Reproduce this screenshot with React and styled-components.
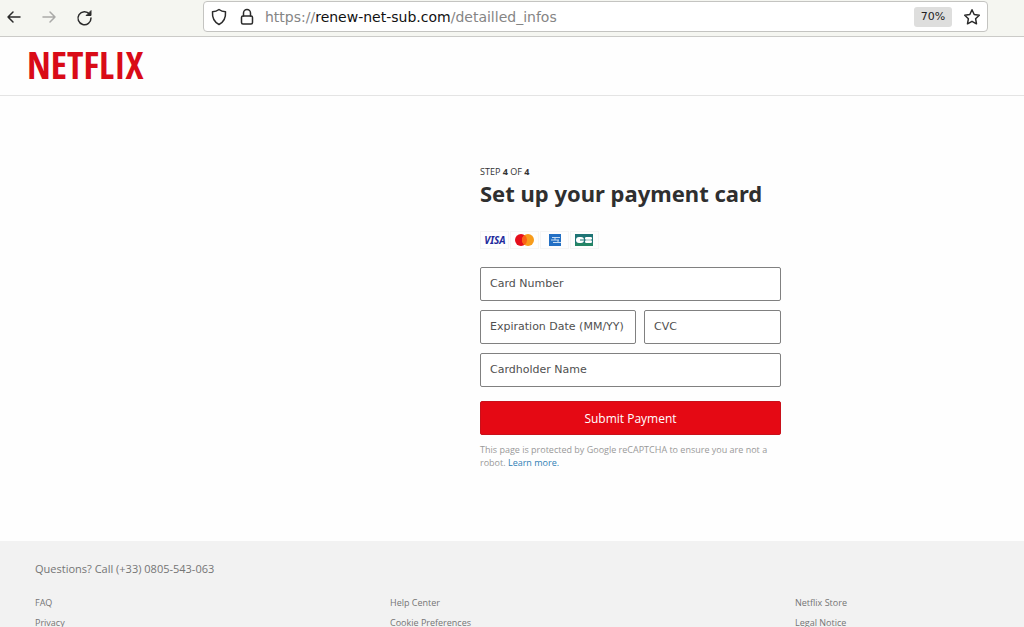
import React from "react";
import styled, { createGlobalStyle } from "styled-components";

const GlobalStyle = createGlobalStyle`
  * {
    box-sizing: border-box;
  }

  body {
    margin: 0;
    background: #fefefe;
    font-family: "Open Sans", "Noto Sans", sans-serif;
  }
`;

const Window = styled.div`
  height: 100vh;
  overflow: hidden;
`;

const Toolbar = styled.div`
  display: flex;
  align-items: center;
  height: 37px;
  padding: 0 36px 3px 4px;
  background: #f5f6f1;
  border-bottom: 1px solid #cbcbc8;
`;

const NavButtons = styled.div`
  display: flex;
  gap: 15px;
  width: 199px;
`;

const IconButton = styled.button`
  display: flex;
  padding: 0;
  border: 0;
  background: none;
  color: ${({ $muted }) => ($muted ? "#aaaaa8" : "#2b2b2b")};

  svg {
    width: 20px;
    height: 20px;
    fill: none;
    stroke: currentColor;
    stroke-width: 1.5;
    stroke-linecap: round;
    stroke-linejoin: round;
  }
`;

const AddressBar = styled.div`
  display: flex;
  flex: 1;
  align-items: center;
  gap: 8px;
  height: 31px;
  padding: 0 5px;
  background: #fff;
  border: 1px solid #c4c4c1;
  border-radius: 4px;
`;

const Url = styled.div`
  flex: 1;
  color: #858585;
  font-family: "DejaVu Sans", sans-serif;
  font-size: 14px;

  span {
    color: #111;
  }
`;

const ZoomLevel = styled.button`
  width: 38px;
  height: 20px;
  margin-right: 2px;
  padding: 0;
  border: 0;
  border-radius: 3px;
  background: #dededd;
  color: #222;
  font: 11px "DejaVu Sans", sans-serif;
`;

const Header = styled.header`
  display: flex;
  align-items: center;
  height: 59px;
  padding: 0 27px 4px;
  border-bottom: 1px solid #e4e4e4;
`;

const Logo = styled.a`
  color: #d90b17;
  font: bold 38px "Liberation Sans Narrow", "Open Sans Condensed", "DejaVu Sans Condensed", sans-serif;
  text-decoration: none;
`;

const Main = styled.main`
  display: flex;
  justify-content: center;
  padding: 69px 0 71px 237px;
`;

const Form = styled.form`
  width: 301px;
`;

const Step = styled.p`
  margin: 0;
  color: #333;
  font-size: 9px;
  line-height: 14px;
`;

const Title = styled.h1`
  margin: 0;
  color: #2f2f2f;
  font-family: "Noto Sans", sans-serif;
  font-size: 22px;
  line-height: 28px;
  white-space: nowrap;
`;

const Cards = styled.div`
  display: flex;
  gap: 1px;
  margin: 24px 0 18px;
`;

const CardBadge = styled.svg`
  width: 29px;
  height: 18px;
  border: 1px solid #f5f5f5;
`;

const Fields = styled.div`
  display: grid;
  grid-template-columns: 156fr 137fr;
  gap: 9px 8px;
  margin-bottom: 14px;
`;

const Field = styled.input`
  grid-column: ${({ $wide }) => ($wide ? "1 / -1" : "auto")};
  width: 100%;
  height: 34px;
  padding: 0 9px 1px;
  border: 1px solid #808080;
  border-radius: 2px;
  background: #fff;
  font: 11px "DejaVu Sans", sans-serif;

  &::placeholder {
    color: #505050;
    opacity: 1;
  }
`;

const SubmitButton = styled.button`
  width: 100%;
  height: 34px;
  border: 1px solid #c9101a;
  border-radius: 2px;
  background: #e50914;
  color: #fff;
  font: 12px "Open Sans", sans-serif;
`;

const Notice = styled.p`
  margin: 8px 0 0;
  color: #999;
  font-size: 9px;
  line-height: 13px;

  a {
    color: #2f7eb5;
    text-decoration: none;
  }
`;

const Footer = styled.footer`
  margin-top: 1px;
  padding: 19px 35px 30px;
  background: #f2f2f2;
  color: #757575;
`;

const Questions = styled.p`
  margin: 0 0 18px;
  font-size: 11px;
  line-height: 18px;
`;

const FooterLinks = styled.nav`
  display: grid;
  grid-template-columns: 355fr 405fr 194fr;
  row-gap: 6px;
  font-size: 9px;
  line-height: 14px;

  a {
    color: inherit;
    text-decoration: none;
  }
`;

const links = [
  "FAQ",
  "Help Center",
  "Netflix Store",
  "Privacy",
  "Cookie Preferences",
  "Legal Notice",
];

const BrowserBar = () => (
  <Toolbar>
    <NavButtons>
      <IconButton type="button" aria-label="Back">
        <svg viewBox="0 0 20 20">
          <path d="M16 10H4M9 5l-5 5 5 5" />
        </svg>
      </IconButton>
      <IconButton type="button" aria-label="Forward" $muted>
        <svg viewBox="0 0 20 20">
          <path d="M4 10h12M11 5l5 5-5 5" />
        </svg>
      </IconButton>
      <IconButton type="button" aria-label="Reload">
        <svg viewBox="0 0 20 20">
          <path d="M15.5 7A6.5 6.5 0 1 0 17 11" />
          <path d="M17 4v4.500H12.500z" fill="currentColor" strokeWidth="1" />
        </svg>
      </IconButton>
    </NavButtons>
    <AddressBar>
      <IconButton type="button" aria-label="Tracking protection">
        <svg viewBox="0 0 20 20">
          <path d="M10 2.5c2 1.6 4 2.2 6.5 2.3.4 5.6-1.5 10.2-6.5 12.7C5 15 3.1 10.4 3.5 4.8 6 4.7 8 4.100 10 2.500z" />
        </svg>
      </IconButton>
      <IconButton type="button" aria-label="Site security">
        <svg viewBox="0 0 20 20">
          <rect x="4.5" y="9" width="11" height="8" rx="1.5" />
          <path d="M6.5 9V6a3.5 3.5 0 0 1 7 0v3" />
        </svg>
      </IconButton>
      <Url>
        https://<span>renew-net-sub.com</span>/detailled_infos
      </Url>
      <ZoomLevel type="button">70%</ZoomLevel>
      <IconButton type="button" aria-label="Bookmark">
        <svg viewBox="0 0 20 20">
          <path d="M10 2.8l2.2 4.7 5.1.7-3.7 3.5.9 5.1-4.5-2.5-4.5 2.5.9-5.1-3.7-3.5 5.1-.7z" />
        </svg>
      </IconButton>
    </AddressBar>
  </Toolbar>
);

const CardBrands = () => (
  <Cards>
    <CardBadge viewBox="0 0 27 16" role="img" aria-label="Visa">
      <text x="14" y="12" textAnchor="middle" fill="#1e2b9c" fontFamily="Noto Sans" fontSize="10" fontWeight="bold" fontStyle="italic">
        VISA
      </text>
    </CardBadge>
    <CardBadge viewBox="0 0 27 16" role="img" aria-label="Mastercard">
      <circle cx="10" cy="8" r="6" fill="#e50e1b" />
      <circle cx="17" cy="8" r="6" fill="#f79c1b" />
      <path d="M13.500 3.100a6 6 0 0 1 0 9.800 6 6 0 0 1 0-9.800z" fill="#fb6115" />
    </CardBadge>
    <CardBadge viewBox="0 0 27 16" role="img" aria-label="American Express">
      <rect x="8" y="2" width="12" height="12" fill="#2470c4" />
      <path d="M11 5.500h8M10 8h8M12 10.500h8M14 5v3M17 8v3" stroke="#c7dcf2" strokeWidth="1" />
    </CardBadge>
    <CardBadge viewBox="0 0 27 16" role="img" aria-label="Carte Bancaire">
      <rect x="4" y="2" width="18" height="12" fill="#1e7475" />
      <rect x="4" y="11" width="18" height="3" fill="#248565" />
      <rect x="5" y="5" width="8" height="6" rx="3" fill="#fff" />
      <rect x="9" y="7.500" width="4" height="1" fill="#1e7475" />
      <rect x="14" y="5" width="7" height="2.700" rx="1.300" fill="#fff" />
      <rect x="14" y="8.300" width="7" height="2.700" rx="1.300" fill="#fff" />
    </CardBadge>
  </Cards>
);

const App = () => (
  <Window>
    <GlobalStyle />
    <BrowserBar />
    <Header>
      <Logo href="#">NETFLIX</Logo>
    </Header>
    <Main>
      <Form onSubmit={(event) => event.preventDefault()}>
        <Step>
          STEP <b>4</b> OF <b>4</b>
        </Step>
        <Title>Set up your payment card</Title>
        <CardBrands />
        {/* display only: nothing can be typed in or sent */}
        <Fields>
          <Field $wide readOnly placeholder="Card Number" aria-label="Card Number" />
          <Field readOnly placeholder="Expiration Date (MM/YY)" aria-label="Expiration Date (MM/YY)" />
          <Field readOnly placeholder="CVC" aria-label="CVC" />
          <Field $wide readOnly placeholder="Cardholder Name" aria-label="Cardholder Name" />
        </Fields>
        <SubmitButton type="button">Submit Payment</SubmitButton>
        <Notice>
          This page is protected by Google reCAPTCHA to ensure you are not a robot.{" "}
          <a href="#">Learn more.</a>
        </Notice>
      </Form>
    </Main>
    <Footer>
      <Questions>Questions? Call (+33) 0805-543-063</Questions>
      <FooterLinks>
        {links.map((link) => (
          <div key={link}>
            <a href="#">{link}</a>
          </div>
        ))}
      </FooterLinks>
    </Footer>
  </Window>
);

export default App;
